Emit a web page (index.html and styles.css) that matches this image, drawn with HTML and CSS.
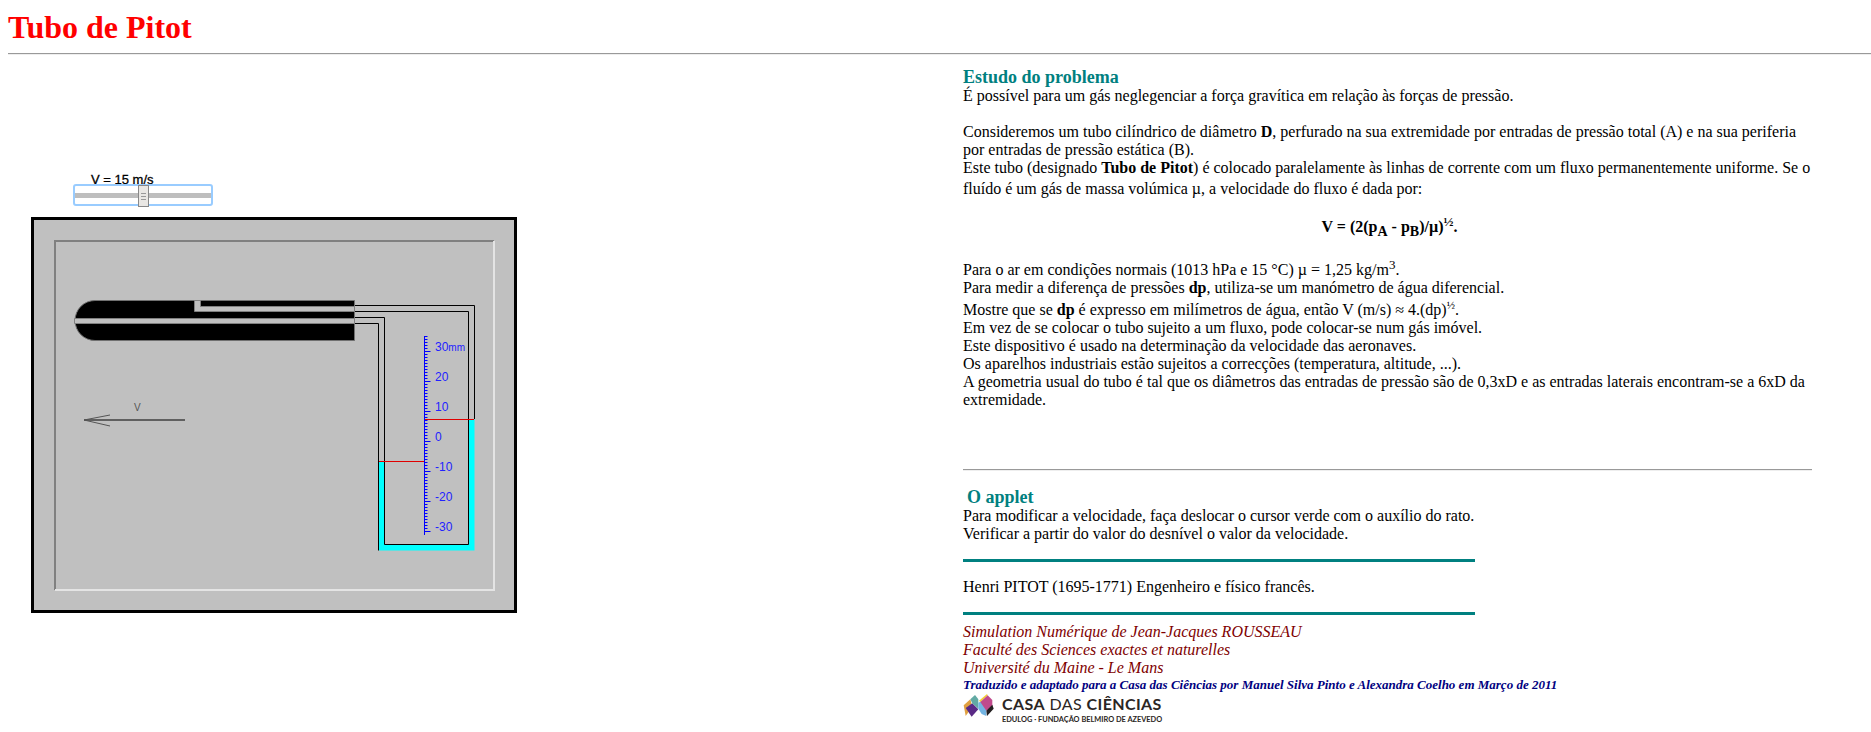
FILE: index.html
```html
<!DOCTYPE html>
<html lang="pt">
<head>
  <meta charset="UTF-8">
  <title>Tubo de Pitot</title>
  <link rel="stylesheet" href="styles.css">
</head>
<body>
  <h1 class="title">Tubo de Pitot</h1>
  <hr class="top-rule">
  <div class="page">
    <div class="left">
      <div class="speed-label">V = 15 m/s</div>
      <div class="slider">
        <div class="slider-track"></div>
        <div class="slider-thumb"><span></span><span></span><span></span></div>
      </div>
      <svg class="applet" width="486" height="396" viewBox="31 217 486 396">
        <rect x="32.5" y="218.5" width="483" height="393" fill="#c0c0c0" stroke="#000" stroke-width="3"/>
        <!-- bevel -->
        <path d="M55 590V241H494" fill="none" stroke="#808080" stroke-width="2"/>
        <path d="M494 241V590H55" fill="none" stroke="#e4e4e4" stroke-width="2"/>
        <!-- tube -->
        <path d="M95 300.5H354.5V340.5H95A20 20 0 0 1 95 300.5Z" fill="#000" stroke="#707070"/>
        <path d="M74.5 318.5H354.5V323.5H74.5Z" fill="#c0c0c0" stroke="#808080"/>
        <path d="M194.5 300.5H200.5V306.5H354.5V311.5H194.5Z" fill="#c0c0c0" stroke="#808080"/>
        <!-- water -->
        <path d="M379 461H384V544H468V419H474.5V550.5H379Z" fill="#0ff"/>
        <!-- manometer -->
        <path d="M355 305.5H474.5V419M355 311.5H468.5V544.5H384.5V317.5H355M355 323.5H378.5V550.5" fill="none" stroke="#000"/>
        <path d="M379 461.5H424M424 419.5H474" fill="none" stroke="#e00000"/>
        <!-- scale -->
        <path d="M424.5 336V535" fill="none" stroke="#00f"/>
        <path d="M426 336V534" fill="none" stroke="#00f" stroke-width="3" stroke-dasharray="1 2"/>
        <path d="M427.5 351V532" fill="none" stroke="#00f" stroke-width="6" stroke-dasharray="1 29"/>
        <g class="scale-text">
          <text x="435" y="351">30<tspan class="scale-unit">mm</tspan></text>
          <text x="435" y="381">20</text>
          <text x="435" y="411">10</text>
          <text x="435" y="441">0</text>
          <text x="435" y="471">-10</text>
          <text x="435" y="501">-20</text>
          <text x="435" y="531">-30</text>
        </g>
        <!-- flow arrow -->
        <path d="M84 420H185" fill="none" stroke="#000"/>
        <path d="M110 415L84 420L110 426" fill="none" stroke="#555"/>
        <text class="flow-label" x="134" y="411">V</text>
      </svg>
    </div>
    <div class="right">
      <h3 class="head">Estudo do problema</h3>
      <p>É possível para um gás neglegenciar a força gravítica em relação às forças de pressão.</p>
      <p class="blank-before">Consideremos um tubo cilíndrico de diâmetro <b>D</b>, perfurado na sua extremidade por entradas de pressão total (A) e na sua periferia por entradas de pressão estática (B).</p>
      <p>Este tubo (designado <b>Tubo de Pitot</b>) é colocado paralelamente às linhas de corrente com um fluxo permanentemente uniforme. Se o</p>
      <p class="nudge">fluído é um gás de massa volúmica µ, a velocidade do fluxo é dada por:</p>
      <p class="formula"><b>V = (2(p<sub>A</sub> - p<sub>B</sub>)/µ)<sup>½</sup>.</b></p>
      <p class="air">Para o ar em condições normais (1013 hPa e 15 °C) µ = 1,25 kg/m<sup class="cube">3</sup>.</p>
      <p>Para medir a diferença de pressões <b>dp</b>, utiliza-se um manómetro de água diferencial.</p>
      <p class="nudge-big">Mostre que se <b>dp</b> é expresso em milímetros de água, então V (m/s) ≈ 4.(dp)<sup>½</sup>.</p>
      <p>Em vez de se colocar o tubo sujeito a um fluxo, pode colocar-se num gás imóvel.</p>
      <p>Este dispositivo é usado na determinação da velocidade das aeronaves.</p>
      <p>Os aparelhos industriais estão sujeitos a correcções (temperatura, altitude, ...).</p>
      <p>A geometria usual do tubo é tal que os diâmetros das entradas de pressão são de 0,3xD e as entradas laterais encontram-se a 6xD da extremidade.</p>
      <hr class="mid-rule">
      <h3 class="head head-applet">O applet</h3>
      <div class="narrow">
        <p>Para modificar a velocidade, faça deslocar o cursor verde com o auxílio do rato.</p>
        <p>Verificar a partir do valor do desnível o valor da velocidade.</p>
        <div class="teal-rule"></div>
        <p class="bio">Henri PITOT (1695-1771) Engenheiro e físico francês.</p>
        <div class="teal-rule"></div>
      </div>
      <div class="credits">
        <p>Simulation Numérique de Jean-Jacques ROUSSEAU</p>
        <p>Faculté des Sciences exactes et naturelles</p>
        <p>Université du Maine - Le Mans</p>
      </div>
      <p class="translated">Traduzido e adaptado para a Casa das Ciências por Manuel Silva Pinto e Alexandra Coelho em Março de 2011</p>
      <div class="logo">
        <svg class="logo-mark" width="32" height="24" viewBox="6 21 96 72">
          <path d="M8 58L28 40L34 62L14 90Z" fill="#e0a040"/>
          <path d="M14 66L34 52L52 70L32 92Z" fill="#5a2a86"/>
          <path d="M28 40L42 27L52 40V68L34 52Z" fill="#62aaa4"/>
          <path d="M52 50L64 44L76 68V90L62 84L52 68Z" fill="#74b4e2"/>
          <path d="M54 44L78 24L80 28L58 48Z" fill="#f4d030"/>
          <path d="M58 48L80 28L94 42V62L76 74Z" fill="#c04a8c"/>
          <path d="M76 74L94 56L98 68L78 90Z" fill="#231f20"/>
        </svg>
        <div class="logo-text">
          <div class="logo-name"><b>CASA</b> DAS <b>CIÊNCIAS</b></div>
          <div class="logo-sub">EDULOG · FUNDAÇÃO BELMIRO DE AZEVEDO</div>
        </div>
      </div>
    </div>
  </div>
</body>
</html>
```

FILE: styles.css
```css
body {
  margin: 0;
  background: #fff;
  color: #000;
  font-family: "Liberation Serif", serif;
  font-size: 16px;
  line-height: 18px;
  overflow: hidden;
}

.title {
  margin: 9px 8px 0;
  color: #f00;
  font-size: 32px;
  line-height: 37px;
}

.top-rule {
  height: 0;
  margin: 7px 0 0 8px;
  border: 0;
  border-top: 1px solid #999;
  border-bottom: 1px solid #eee;
}

.mid-rule {
  height: 0;
  margin: 60px 0 0;
  border: 0;
  border-top: 1px solid #999;
  border-bottom: 1px solid #eee;
}

.page {
  display: flex;
}

.left {
  width: 963px;
  flex: none;
  padding: 118px 0 0 31px;
  box-sizing: border-box;
}

.right {
  width: 849px;
  flex: none;
  padding-top: 12px;
}

p {
  margin: 0;
}

sup, sub {
  line-height: 0;
}

sup {
  font-size: 11px;
}

sub {
  font-size: 14px;
}

/* applet */
.speed-label {
  height: 11px;
  margin-left: 60px;
  font-family: "Liberation Sans", sans-serif;
  font-size: 13px;
  line-height: 14px;
  -webkit-text-stroke: 0.3px #000;
}

.slider {
  position: relative;
  width: 136px;
  height: 18px;
  margin: 0 0 11px 42px;
  border: 2px solid #9cf;
  border-radius: 3px;
  background: #fff;
}

.slider-track {
  height: 5px;
  margin-top: 7px;
  position: absolute;
  left: 0;
  right: 0;
  background: #bebebe;
}

.slider-thumb {
  position: absolute;
  top: -1px;
  left: 63px;
  width: 9px;
  height: 20px;
  display: flex;
  flex-direction: column;
  justify-content: center;
  align-items: center;
  gap: 2px;
  border: 1px solid #888;
  background: #e9e7e4;
}

.slider-thumb span {
  width: 5px;
  height: 1px;
  background: #999;
}

.applet {
  display: block;
}

.scale-text text {
  fill: #2222ff;
  font-family: "Liberation Sans", sans-serif;
  font-size: 12px;
}

.scale-text .scale-unit {
  font-size: 10px;
}

.flow-label {
  fill: #555;
  font-family: "Liberation Sans", sans-serif;
  font-size: 10px;
}

/* text column */
.head {
  margin: 0;
  color: #008080;
  font-size: 18px;
  line-height: 20px;
}

.head-applet {
  margin-top: 16px;
  padding-left: 4px;
}

.blank-before {
  margin-top: 18px;
}

.nudge {
  margin-top: 3px;
}

.formula {
  margin-top: 20px;
  padding-left: 4px;
  text-align: center;
}

.formula sup {
  font-size: 13.33px;
}

.air {
  margin-top: 25px;
}

.air .cube {
  font-size: 13px;
}

.nudge-big {
  margin-top: 4px;
}

.narrow {
  width: 512px;
}

.teal-rule {
  height: 3px;
  background: #008080;
  margin-top: 16px;
}

.bio {
  margin: 16px 0 0;
}

.credits {
  margin-top: 8px;
  color: #800000;
  font-style: italic;
}

.translated {
  color: #000080;
  font-size: 13px;
  font-style: italic;
  font-weight: bold;
  line-height: 15px;
}

.logo {
  display: flex;
  gap: 7px;
  align-items: flex-start;
}

.logo-mark {
  flex: none;
  margin-top: 1px;
}

.logo-text {
  margin-top: 3px;
  font-family: Lato, sans-serif;
  color: #2b2624;
}

.logo-name {
  font-size: 16px;
  line-height: 18px;
  letter-spacing: 0.4px;
}

.logo-sub {
  margin-top: 2px;
  font-size: 7.4px;
  font-weight: bold;
  line-height: 9px;
}
```
